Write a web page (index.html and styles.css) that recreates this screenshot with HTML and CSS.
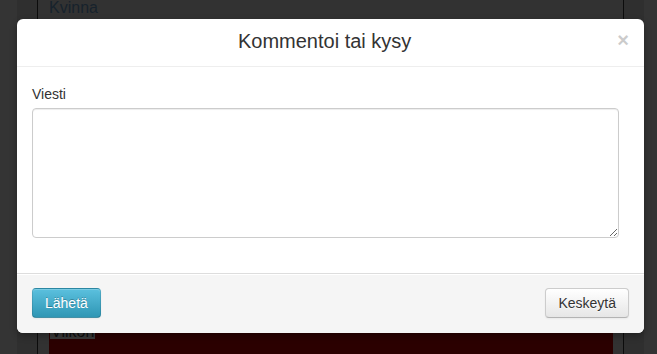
FILE: index.html
```html
<!DOCTYPE html>
<html lang="fi">
<head>
<meta charset="utf-8">
<title>Kommentoi tai kysy</title>
<link rel="stylesheet" href="styles.css">
</head>
<body>
<div class="page">
  <div class="table">
    <div class="row-top">Kvinna</div>
    <div class="bottom">
      <div class="red-box">
        <span class="tab">Viikon</span>
      </div>
    </div>
  </div>
</div>

<div class="modal">
  <div class="modal-header">
    <h3 class="modal-title">Kommentoi tai kysy</h3>
    <span class="close">×</span>
  </div>
  <div class="modal-body">
    <label class="field-label" for="msg">Viesti</label>
    <textarea id="msg" class="field-input"></textarea>
  </div>
  <div class="modal-footer">
    <button class="btn btn-info">Lähetä</button>
    <button class="btn btn-default">Keskeytä</button>
  </div>
</div>
</body>
</html>
```

FILE: styles.css
```css
html, body {
  margin: 0;
  padding: 0;
  height: 354px;
  overflow: hidden;
}
body {
  background: #343434;
  font-family: "Liberation Sans", Arial, sans-serif;
  font-size: 14px;
  color: #333;
}
.page {
  margin: 0 13px 0 17px;
  height: 354px;
  background: #2f2f2f;
  display: flex;
}
.table {
  flex: 1;
  margin: 0 20px 0 20px;
  border-left: 1px solid #0c0c0c;
  border-right: 1px solid #0c0c0c;
  display: flex;
  flex-direction: column;
  background: #323232;
}
.row-top {
  margin-top: -2px;
  padding-left: 11px;
  font-size: 16px;
  line-height: 20px;
  color: #17222c;
}
.bottom {
  margin-top: auto;
  padding-left: 11px;
  padding-right: 10px;
}
.red-box {
  height: 34px;
  background: #2b0000;
}
.tab {
  display: inline-block;
  margin-left: 1px;
  padding: 0 1px;
  height: 19px;
  line-height: 24px;
  font-size: 16px;
  color: #0e0e0e;
  background: #3a3a3a;
  overflow: hidden;
}

.modal {
  position: absolute;
  left: 17px;
  top: 19px;
  width: 627px;
  height: 314px;
  background: #fff;
  border-radius: 6px;
  box-shadow: 0 3px 7px rgba(0,0,0,0.3);
  display: flex;
  flex-direction: column;
  overflow: hidden;
}
.modal-header {
  display: flex;
  align-items: flex-start;
  padding: 7px 15px 10px 15px;
  border-bottom: 1px solid #eee;
}
.modal-title {
  flex: 1;
  margin: 0;
  font-size: 20px;
  font-weight: normal;
  line-height: 30px;
  text-align: center;
  color: #333;
}
.close {
  font-size: 20px;
  font-weight: bold;
  line-height: 30px;
  color: #000;
  opacity: 0.2;
  margin-top: -1px;
}
.modal-body {
  padding: 17px 15px 35px 15px;
  display: flex;
  flex-direction: column;
  align-items: flex-start;
}
.field-label {
  display: block;
  line-height: 20px;
  margin-bottom: 4px;
  color: #333;
}
.field-input {
  box-sizing: border-box;
  width: 587px;
  height: 130px;
  margin: 0;
  padding: 4px 6px;
  border: 1px solid #ccc;
  border-radius: 4px;
  box-shadow: inset 0 1px 1px rgba(0,0,0,0.075);
  font-family: "Liberation Sans", Arial, sans-serif;
  font-size: 14px;
}
.modal-footer {
  margin-top: auto;
  display: flex;
  justify-content: space-between;
  padding: 14px 15px 15px 15px;
  background: #f5f5f5;
  border-top: 1px solid #ddd;
  box-shadow: inset 0 1px 0 #fff;
}
.btn {
  font-family: "Liberation Sans", Arial, sans-serif;
  font-size: 14px;
  line-height: 20px;
  padding: 4px 12px;
  border-radius: 4px;
  cursor: pointer;
  margin: 0;
}
.btn-info {
  color: #fff;
  text-shadow: 0 -1px 0 rgba(0,0,0,0.25);
  background-image: linear-gradient(to bottom, #5bc0de, #2f96b4);
  border: 1px solid rgba(0,0,0,0.1);
  border-bottom-color: rgba(0,0,0,0.25);
  box-shadow: inset 0 1px 0 rgba(255,255,255,0.2), 0 1px 2px rgba(0,0,0,0.05);
}
.btn-default {
  color: #333;
  text-shadow: 0 1px 1px rgba(255,255,255,0.75);
  background-image: linear-gradient(to bottom, #ffffff, #e6e6e6);
  border: 1px solid #ccc;
  border-bottom-color: #b3b3b3;
  box-shadow: inset 0 1px 0 rgba(255,255,255,0.2), 0 1px 2px rgba(0,0,0,0.05);
}
```
